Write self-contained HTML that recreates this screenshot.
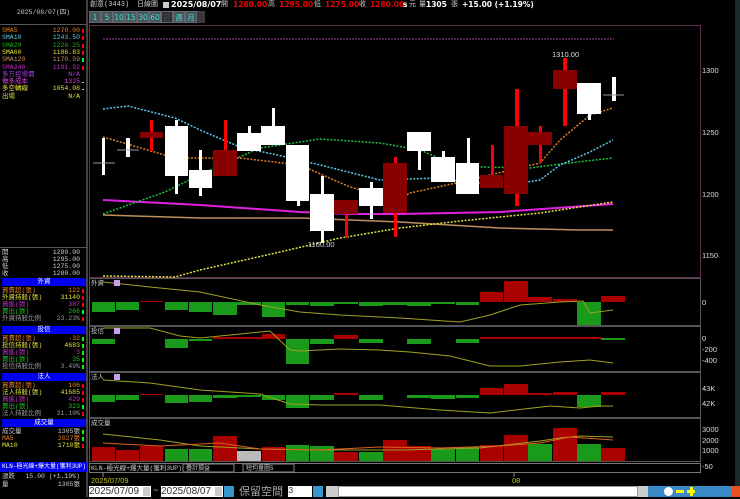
<!DOCTYPE html>
<html><head><meta charset="utf-8">
<style>
*{margin:0;padding:0;box-sizing:border-box}
body{width:740px;height:497px;background:#000;overflow:hidden;position:relative;font-family:"Liberation Mono","Noto Sans CJK TC",monospace;font-size:7px;color:#ccc}
.a{position:absolute}
.row{position:absolute;left:2px;width:82px;height:7.3px;line-height:7.3px;font-size:6.5px;white-space:nowrap}
.row b{position:absolute;right:4px;font-weight:normal}
.row i{position:absolute;right:0;top:2px;width:2px;height:4px}
.hdr{position:absolute;left:2px;width:84px;height:8px;background:#0000ee;color:#fff;text-align:center;font-size:6.5px;line-height:8px}
.btn{position:absolute;top:11px;width:12px;height:12px;text-align:center;color:#4dd;font-size:7.5px;line-height:12px;background:#4a5656;border:1px solid #667;font-family:"DejaVu Sans",sans-serif}
.t{position:absolute;top:0;height:10px;line-height:10px;font-size:7px;white-space:nowrap}
.r{color:#e00;font-weight:bold;font-family:"DejaVu Sans",sans-serif;font-size:7.5px}
.w{color:#fff;font-weight:bold;font-family:"DejaVu Sans",sans-serif;font-size:7.5px}
</style></head><body>
<div class="a" style="left:0;top:0;width:88px;height:497px;border-right:2px solid #444"></div>
<div class="a" style="left:0;top:0;width:87px;height:25px;border-bottom:1px solid #555;color:#ccc;font-size:6.5px;text-align:center;line-height:25px">2025/08/07(四)</div>
<div class="row" style="top:27px;color:#e08020">SMA5<b>1270.00</b><i style="background:#f00"></i></div>
<div class="row" style="top:34.3px;color:#5bc8e8">SMA10<b>1243.50</b><i style="background:#f00"></i></div>
<div class="row" style="top:41.6px;color:#20b020">SMA20<b>1226.25</b><i style="background:#f00"></i></div>
<div class="row" style="top:48.9px;color:#e0e040">SMA60<b>1186.83</b><i style="background:#f00"></i></div>
<div class="row" style="top:56.2px;color:#c09060">SMA120<b>1170.59</b><i style="background:#0f0"></i></div>
<div class="row" style="top:63.5px;color:#c030c0">SMA240<b>1191.92</b><i style="background:#f00"></i></div>
<div class="row" style="top:70.8px;color:#a040e0">多方控場價<b>N/A</b></div>
<div class="row" style="top:78.1px;color:#e040e0">做多成本<b>1325</b><i style="background:#ccc;height:1px;top:4px"></i></div>
<div class="row" style="top:85.4px;color:#e0e040">多空轉線<b>1054.08</b><i style="background:#ccc;height:1px;top:4px"></i></div>
<div class="row" style="top:92.7px;color:#e0e040">出場<b>N/A</b></div>
<div class="a" style="left:0;top:247px;width:87px;height:1px;background:#555"></div>
<div class="row" style="top:249px">開<b>1280.00</b></div>
<div class="row" style="top:256px">高<b>1295.00</b></div>
<div class="row" style="top:263px">低<b>1275.00</b></div>
<div class="row" style="top:270px">收<b>1280.00</b></div>
<div class="hdr" style="top:278px">外資</div>
<div class="row" style="top:287px;color:#e08020">買賣超(張)<b>122</b><i style="background:#f00"></i></div>
<div class="row" style="top:294px;color:#e0e040">外資持股(張)<b>31140</b><i style="background:#f00"></i></div>
<div class="row" style="top:301px;color:#c030c0">買進(張)<b>387</b><i style="background:#f00"></i></div>
<div class="row" style="top:308px;color:#20c020">賣出(張)<b>266</b><i style="background:#0f0"></i></div>
<div class="row" style="top:315px;color:#999">外資持股比例<b>23.23%</b><i style="background:#f00"></i></div>
<div class="hdr" style="top:326px">投信</div>
<div class="row" style="top:335px;color:#e08020">買賣超(張)<b>-32</b><i style="background:#0f0"></i></div>
<div class="row" style="top:342px;color:#e0e040">投信持股(張)<b>4683</b><i style="background:#0f0"></i></div>
<div class="row" style="top:349px;color:#c030c0">買進(張)<b>3</b><i style="background:#0f0"></i></div>
<div class="row" style="top:356px;color:#20c020">賣出(張)<b>35</b><i style="background:#0f0"></i></div>
<div class="row" style="top:363px;color:#999">投信持股比例<b>3.49%</b><i style="background:#0f0"></i></div>
<div class="hdr" style="top:373px">法人</div>
<div class="row" style="top:382px;color:#e08020">買賣超(張)<b>106</b><i style="background:#f00"></i></div>
<div class="row" style="top:389px;color:#e0e040">法人持股(張)<b>41685</b><i style="background:#f00"></i></div>
<div class="row" style="top:396px;color:#c030c0">買進(張)<b>429</b><i style="background:#f00"></i></div>
<div class="row" style="top:403px;color:#20c020">賣出(張)<b>323</b><i style="background:#0f0"></i></div>
<div class="row" style="top:410px;color:#999">法人持股比例<b>31.10%</b><i style="background:#f00"></i></div>
<div class="hdr" style="top:419px">成交量</div>
<div class="row" style="top:428px;color:#ccc">成交量<b>1305張</b><i style="background:#0f0"></i></div>
<div class="row" style="top:435px;color:#e08020">MA5<b>2027張</b><i style="background:#0f0"></i></div>
<div class="row" style="top:442px;color:#e0e040">MA10<b>1710張</b><i style="background:#f00"></i></div>
<div class="a" style="left:0;top:462px;width:87px;height:10px;background:#0000ee;color:#fff;font-size:6px;line-height:10px;padding-left:2px;white-space:nowrap;overflow:hidden">KLN-極光線+爆大量(獲利3UP)</div>
<div class="row" style="top:473px">漲跌<b>15.00 (+1.19%)</b></div>
<div class="row" style="top:481px">量<b>1305張</b></div>

<!-- top bar -->
<span class="t" style="left:90px">創意(3443)</span>
<span class="t" style="left:137px">日線圖</span>
<span class="a" style="left:163px;top:2px;width:6px;height:6px;background:#ccc"></span>
<span class="t w" style="left:171px;font-size:8px">2025/08/07</span>
<span class="t" style="left:221px">開</span><span class="t r" style="left:233px">1280.00</span>
<span class="t" style="left:268px">高</span><span class="t r" style="left:279px">1295.00</span>
<span class="t" style="left:314px">低</span><span class="t r" style="left:325px">1275.00</span>
<span class="t" style="left:359px">收</span><span class="t r" style="left:370px">1280.00</span>
<span class="t w" style="left:403px">s</span><span class="t" style="left:409px">元</span>
<span class="t" style="left:419px">量</span><span class="t w" style="left:426px">1305</span>
<span class="t" style="left:451px">張</span>
<span class="t w" style="left:462px">+15.00 (+1.19%)</span>
<div class="btn" style="left:89px">1</div><div class="btn" style="left:101px">5</div><div class="btn" style="left:113px">10</div><div class="btn" style="left:125px">15</div><div class="btn" style="left:137px">30</div><div class="btn" style="left:149px">60</div><div class="btn" style="left:161px;background:#2a2e2e;color:#555">日</div><div class="btn" style="left:173px">週</div><div class="btn" style="left:185px">月</div>
<div class="a" style="left:197px;top:11px;width:8px;height:12px;background:#3a3a3a"></div>
<div class="a" style="left:735px;top:0;width:5px;height:486px;background:#1a2a2a"></div>

<svg class="a" style="left:0;top:0" width="740" height="497" viewBox="0 0 740 497">
<g fill="none" stroke="#444" stroke-width="1">
<rect x="89.5" y="25.5" width="611" height="252" stroke="#603050"/>
<rect x="89.5" y="278.5" width="611" height="47" stroke="#555"/>
<rect x="89.5" y="326.5" width="611" height="45" stroke="#555"/>
<rect x="89.5" y="372.5" width="611" height="45" stroke="#555"/>
<rect x="89.5" y="418.5" width="611" height="43" stroke="#555"/>
<rect x="89.5" y="463.5" width="611" height="9" stroke="#777"/>
</g>
<line x1="103" y1="39" x2="614" y2="39" stroke="#a040a0" stroke-dasharray="2,1"/>
<polyline fill="none" stroke="#c09060" stroke-width="1.5" points="103,215 200,218 300,218 400,222 500,228 580,230 613,230"/>
<polyline fill="none" stroke="#e020e0" stroke-width="2" points="103,200 200,205 300,212 350,214 400,214 500,212 613,204"/>
<g fill="none" stroke-width="1.5" stroke-dasharray="2,1.5">
<polyline stroke="#e0e040" points="103,276 175,277 200,270 280,252 340,238 400,228 460,221 540,213 613,202"/>
<polyline stroke="#20c040" points="103,214 165,192 210,170 260,148 320,139 380,143 420,150 450,163 480,167 530,168 560,164 613,158"/>
<polyline stroke="#5bc8e8" points="103,109 128,106 175,118 200,130 240,147 300,160 340,170 380,180 407,179 440,178 470,183 520,183 540,180 560,165 590,152 613,140"/>
<polyline stroke="#e08020" points="103,137 175,158 240,158 300,165 350,187 398,200 410,193 470,180 510,170 540,163 560,140 590,115 613,108"/>
</g>
<g stroke="none">
<rect x="102" y="138" width="3" height="37" fill="#fff"/><line x1="93" y1="163" x2="115" y2="163" stroke="#999"/>
<rect x="126" y="138" width="4" height="19" fill="#fff"/><line x1="117" y1="150" x2="139" y2="150" stroke="#999"/>
<rect x="150" y="120" width="3" height="31" fill="#f00"/><rect x="140" y="132" width="23" height="6" fill="#800"/>
<rect x="175" y="120" width="3" height="74" fill="#fff"/><rect x="165" y="126" width="23" height="50" fill="#fff"/>
<rect x="199" y="150" width="3" height="46" fill="#fff"/><rect x="189" y="170" width="23" height="18" fill="#fff"/>
<rect x="224" y="120" width="3" height="30" fill="#f00"/><rect x="213" y="150" width="24" height="26" fill="#800"/>
<rect x="248" y="126" width="3" height="10" fill="#fff"/><rect x="237" y="133" width="24" height="18" fill="#fff"/>
<rect x="272" y="108" width="3" height="20" fill="#fff"/><rect x="261" y="126" width="24" height="19" fill="#fff"/>
<rect x="297" y="145" width="3" height="61" fill="#fff"/><rect x="286" y="145" width="23" height="56" fill="#fff"/>
<rect x="321" y="176" width="3" height="67" fill="#fff"/><rect x="310" y="194" width="24" height="37" fill="#fff"/>
<rect x="345" y="200" width="3" height="38" fill="#f00"/><rect x="334" y="200" width="24" height="14" fill="#800"/>
<rect x="370" y="182" width="3" height="37" fill="#fff"/><rect x="359" y="188" width="24" height="18" fill="#fff"/>
<rect x="394" y="157" width="3" height="80" fill="#f00"/><rect x="383" y="163" width="24" height="50" fill="#800"/>
<rect x="418" y="132" width="3" height="38" fill="#fff"/><rect x="407" y="132" width="24" height="19" fill="#fff"/>
<rect x="442" y="151" width="3" height="31" fill="#fff"/><rect x="431" y="157" width="24" height="25" fill="#fff"/>
<rect x="467" y="138" width="3" height="56" fill="#fff"/><rect x="456" y="163" width="23" height="31" fill="#fff"/>
<rect x="491" y="145" width="3" height="43" fill="#f00"/><rect x="480" y="175" width="23" height="13" fill="#800"/>
<rect x="515" y="89" width="4" height="117" fill="#f00"/><rect x="504" y="126" width="24" height="68" fill="#800"/>
<rect x="539" y="126" width="3" height="37" fill="#f00"/><rect x="528" y="132" width="24" height="13" fill="#800"/>
<rect x="563" y="58" width="4" height="68" fill="#f00"/><rect x="553" y="70" width="24" height="19" fill="#800"/>
<rect x="588" y="83" width="3" height="37" fill="#fff"/><rect x="577" y="83" width="24" height="31" fill="#fff"/>
<rect x="612" y="77" width="4" height="24" fill="#fff"/><line x1="603" y1="95" x2="624" y2="95" stroke="#999"/>
</g>
<text x="552" y="57" fill="#ddd" font-size="7.5" font-family="Liberation Sans">1310.00</text>
<text x="308" y="247" fill="#ddd" font-size="7.5" font-family="Liberation Sans">1160.00</text>
<g fill="#ddd" font-size="7.5" font-family="Liberation Sans">
<text x="702" y="73">1300</text><text x="702" y="135">1250</text><text x="702" y="197">1200</text><text x="702" y="258">1150</text>
<text x="702" y="305">0</text><text x="702" y="341">0</text><text x="702" y="352">-200</text><text x="702" y="363">-400</text>
<text x="702" y="391">43K</text><text x="702" y="406">42K</text>
<text x="702" y="432">3000</text><text x="702" y="443">2000</text><text x="702" y="453">1000</text><text x="702" y="469">-50</text>
</g>
<g fill="#1a9a1a">
<rect x="92" y="302" width="23" height="10"/><rect x="116" y="302" width="23" height="8"/><rect x="165" y="302" width="23" height="8"/><rect x="189" y="302" width="23" height="10"/><rect x="213" y="302" width="24" height="13"/><rect x="237" y="302" width="24" height="3"/><rect x="262" y="302" width="23" height="15"/><rect x="286" y="302" width="23" height="3"/><rect x="310" y="302" width="24" height="4"/><rect x="334" y="302" width="24" height="2"/><rect x="359" y="302" width="24" height="4"/><rect x="383" y="302" width="24" height="3"/><rect x="407" y="302" width="24" height="4"/><rect x="431" y="302" width="24" height="2"/><rect x="456" y="302" width="23" height="3"/><rect x="577" y="302" width="24" height="23"/>
</g>
<g fill="#a00">
<rect x="140" y="301" width="23" height="1"/><rect x="480" y="292" width="23" height="10"/><rect x="504" y="281" width="24" height="21"/><rect x="528" y="297" width="24" height="5"/><rect x="553" y="299" width="24" height="3"/><rect x="601" y="296" width="24" height="6"/>
</g>
<polyline fill="none" stroke="#a0a020" points="103,282 150,287 200,292 260,305 300,312 340,315 400,318 460,322 490,315 520,305 560,302 583,301 590,313 613,310"/>
<g fill="#1a9a1a">
<rect x="92" y="339" width="23" height="5"/><rect x="165" y="339" width="23" height="9"/><rect x="189" y="339" width="23" height="2"/><rect x="286" y="339" width="23" height="25"/><rect x="310" y="339" width="24" height="5"/><rect x="359" y="339" width="24" height="4"/><rect x="407" y="339" width="24" height="5"/><rect x="456" y="339" width="23" height="4"/><rect x="601" y="338" width="24" height="2"/>
</g>
<g fill="#a00">
<rect x="213" y="337" width="49" height="2"/><rect x="262" y="334" width="23" height="5"/><rect x="334" y="335" width="24" height="4"/><rect x="480" y="337" width="121" height="2"/>
</g>
<polyline fill="none" stroke="#a0a020" points="103,328 150,328 180,336 200,338 270,331 290,350 300,351 340,349 380,350 410,352 450,356 490,366 520,366 560,362 590,360 613,363"/>
<g fill="#1a9a1a">
<rect x="92" y="395" width="23" height="7"/><rect x="116" y="395" width="23" height="5"/><rect x="165" y="395" width="23" height="8"/><rect x="189" y="395" width="23" height="7"/><rect x="213" y="395" width="24" height="3"/><rect x="237" y="395" width="24" height="2"/><rect x="262" y="395" width="23" height="5"/><rect x="286" y="395" width="23" height="13"/><rect x="310" y="395" width="24" height="5"/><rect x="359" y="395" width="24" height="5"/><rect x="407" y="395" width="24" height="3"/><rect x="431" y="395" width="24" height="4"/><rect x="456" y="395" width="23" height="3"/><rect x="577" y="395" width="24" height="12"/>
</g>
<g fill="#a00">
<rect x="140" y="394" width="23" height="1"/><rect x="334" y="393" width="24" height="2"/><rect x="480" y="388" width="23" height="7"/><rect x="504" y="384" width="24" height="11"/><rect x="528" y="393" width="24" height="2"/><rect x="553" y="392" width="24" height="3"/><rect x="601" y="392" width="24" height="3"/>
</g>
<polyline fill="none" stroke="#a0a020" points="103,380 150,383 200,390 260,394 290,404 320,405 380,405 440,410 490,413 550,406 580,408 600,406 613,406"/>
<g>
<rect x="92" y="447" width="23" height="14" fill="#a00"/><rect x="116" y="450" width="23" height="11" fill="#a00"/><rect x="140" y="446" width="23" height="15" fill="#a00"/><rect x="165" y="449" width="23" height="12" fill="#1a9a1a"/><rect x="189" y="449" width="23" height="12" fill="#1a9a1a"/><rect x="213" y="436" width="24" height="25" fill="#a00"/><rect x="237" y="451" width="24" height="10" fill="#bbb"/><rect x="262" y="447" width="23" height="14" fill="#a00"/><rect x="286" y="445" width="23" height="16" fill="#1a9a1a"/><rect x="310" y="446" width="24" height="15" fill="#1a9a1a"/><rect x="334" y="452" width="24" height="9" fill="#a00"/><rect x="359" y="452" width="24" height="9" fill="#1a9a1a"/><rect x="383" y="440" width="24" height="21" fill="#a00"/><rect x="407" y="446" width="24" height="15" fill="#a00"/><rect x="431" y="449" width="24" height="12" fill="#1a9a1a"/><rect x="456" y="447" width="23" height="14" fill="#1a9a1a"/><rect x="480" y="445" width="23" height="16" fill="#a00"/><rect x="504" y="435" width="24" height="26" fill="#a00"/><rect x="528" y="444" width="24" height="17" fill="#1a9a1a"/><rect x="553" y="428" width="24" height="33" fill="#a00"/><rect x="577" y="444" width="24" height="17" fill="#1a9a1a"/><rect x="601" y="448" width="24" height="13" fill="#a00"/>
</g>
<polyline fill="none" stroke="#a0a020" points="103,434 160,440 200,446 260,449 320,450 400,450 480,448 540,441 560,438 580,436 613,437"/>
<polyline fill="none" stroke="#e06020" points="103,443 160,446 220,443 260,449 320,450 380,447 440,448 500,446 540,443 570,437 613,440"/>
<g fill="#ccc" font-size="6.5" font-family="Liberation Mono,Noto Sans CJK TC,monospace">
<text x="91" y="285">外資</text><text x="91" y="333">投信</text><text x="91" y="379">法人</text><text x="91" y="425">成交量</text>
<text x="91" y="470">KLN-極光線+爆大量(獲利3UP)</text>
</g>
<rect x="114" y="280" width="6" height="6" fill="#c8a0f0"/><rect x="114" y="328" width="6" height="6" fill="#c8a0f0"/><rect x="114" y="374" width="6" height="6" fill="#c8a0f0"/>
<rect x="183" y="464" width="51" height="8" fill="none" stroke="#888"/><text x="186" y="470" fill="#ccc" font-size="6">疊計損益</text>
<rect x="243" y="464" width="51" height="8" fill="none" stroke="#888"/><text x="246" y="470" fill="#ccc" font-size="6">短均量圖5</text>
<line x1="103" y1="473" x2="103" y2="477" stroke="#888"/><line x1="514" y1="473" x2="514" y2="477" stroke="#888"/>
<text x="91" y="483" fill="#c0c020" font-size="7.5" font-family="Liberation Sans">2025/07/09</text>
<text x="512" y="483" fill="#c0c020" font-size="7.5" font-family="Liberation Sans">08</text>
</svg>

<div class="a" style="left:89px;top:486px;width:62px;height:11px;background:#fff;color:#333;font-size:10px;line-height:11px;font-family:'Liberation Sans'">2025/07/09</div>
<div class="a" style="left:143px;top:487px;width:7px;height:9px;background:#ccc"></div>
<div class="a" style="left:153px;top:486px;color:#ccc;font-size:9px">~</div>
<div class="a" style="left:161px;top:486px;width:62px;height:11px;background:#fff;color:#333;font-size:10px;line-height:11px;font-family:'Liberation Sans'">2025/08/07</div>
<div class="a" style="left:215px;top:487px;width:7px;height:9px;background:#ccc"></div>
<div class="a" style="left:224px;top:486px;width:10px;height:11px;background:#39c"></div>
<div class="a" style="left:239px;top:485px;color:#aaa;font-size:11px;font-family:'Noto Sans CJK TC';line-height:12px">保留空間</div>
<div class="a" style="left:288px;top:486px;width:24px;height:11px;background:#fff;color:#333;font-size:9px;line-height:11px">3</div>
<div class="a" style="left:313px;top:486px;width:10px;height:11px;background:#39c"></div>
<div class="a" style="left:326px;top:486px;width:12px;height:11px;background:#ccc"></div>
<div class="a" style="left:338px;top:486px;width:300px;height:11px;background:#fff;border:1px solid #999"></div>
<div class="a" style="left:638px;top:486px;width:10px;height:11px;background:#ccc"></div>
<div class="a" style="left:648px;top:486px;width:83px;height:11px;background:#3a8ac8"></div>
<div class="a" style="left:664px;top:487px;width:9px;height:9px;border-radius:50%;background:#fff"></div>
<div class="a" style="left:676px;top:490px;width:8px;height:3px;background:#ff0"></div>
<div class="a" style="left:687px;top:490px;width:8px;height:3px;background:#ff0"></div><div class="a" style="left:689.5px;top:487px;width:3px;height:9px;background:#ff0"></div>
<div class="a" style="left:731px;top:486px;width:9px;height:11px;background:#e85020"></div>
</body></html>
